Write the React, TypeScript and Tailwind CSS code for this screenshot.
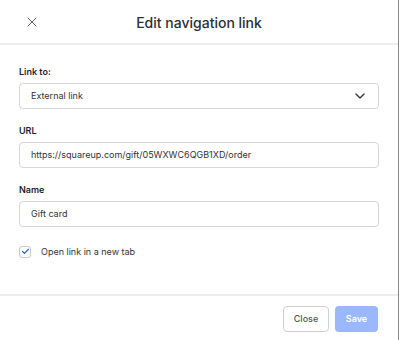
import { ChevronDown, X, Check } from "lucide-react";

const FONT = { fontFamily: "Inter, 'Liberation Sans', sans-serif" };

function Field({ label, children }: { label: string; children: React.ReactNode }) {
  return (
    <div className="flex flex-col">
      <label className="text-[9px] font-semibold text-[#1f1f1f] mb-[3px] leading-[16px]">{label}</label>
      {children}
    </div>
  );
}

export default function App() {
  return (
    <div className="w-[400px] h-[340px] bg-white flex" style={FONT}>
      <div className="w-[399px] h-full border-r border-[#8a8a8a] flex flex-col">
        {/* header */}
        <div className="h-[45px] shrink-0 relative flex items-center justify-center border-b-2 border-[#ededed]">
          <button className="absolute left-[24px] top-[14px] text-[#555]">
            <X size={16} strokeWidth={1.4} />
          </button>
          <h1 className="text-[14px] font-medium text-[#2b2f33] mt-[1px]">Edit navigation link</h1>
        </div>

        {/* body */}
        <div className="flex-1 px-[19px] pt-[19px] flex flex-col gap-[14px]">
          <Field label="Link to:">
            <div className="h-[26px] border border-[#d6d6d6] rounded-[4px] flex items-center justify-between pl-[11px] pr-[10px]">
              <span className="text-[9px] text-[#333]">External link</span>
              <ChevronDown size={16} strokeWidth={2} className="text-[#333]" />
            </div>
          </Field>
          <Field label="URL">
            <div className="h-[26px] border border-[#d6d6d6] rounded-[4px] flex items-center pl-[11px]">
              <span className="text-[9px] text-[#333]">https://squareup.com/gift/05WXWC6QGB1XD/order</span>
            </div>
          </Field>
          <Field label="Name">
            <div className="h-[26px] border border-[#d6d6d6] rounded-[4px] flex items-center pl-[11px]">
              <span className="text-[9px] text-[#333]">Gift card</span>
            </div>
          </Field>
          <div className="flex items-center gap-[10px] mt-[4px]">
            <div className="w-[12px] h-[12px] border border-[#c9c9c9] rounded-[3px] flex items-center justify-center">
              <Check size={9} strokeWidth={3} className="text-[#1a5fd6]" />
            </div>
            <span className="text-[9px] text-[#333]">Open link in a new tab</span>
          </div>
        </div>

        {/* footer */}
        <div className="h-[46px] shrink-0 border-t-2 border-[#ededed] flex items-start justify-end gap-[6px] pr-[20px] pt-[10px]">
          <button className="h-[26px] w-[46px] border border-[#cfcfcf] rounded-[4px] text-[9px] font-medium text-[#555] bg-white">
            Close
          </button>
          <button className="h-[26px] w-[43px] rounded-[4px] text-[9px] font-semibold text-white bg-[#9bb8ff]">
            Save
          </button>
        </div>
      </div>
    </div>
  );
}
